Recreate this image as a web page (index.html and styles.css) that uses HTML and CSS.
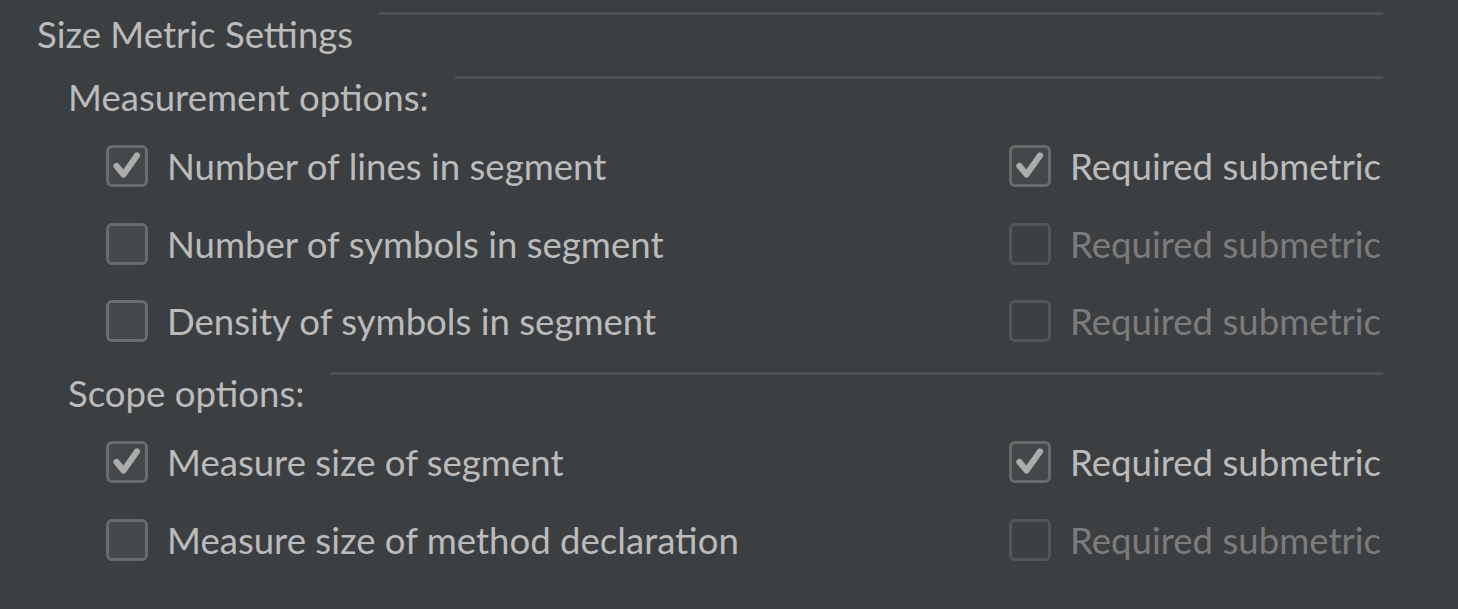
FILE: index.html
```html
<!DOCTYPE html>
<html>
<head>
<meta charset="utf-8">
<link rel="stylesheet" href="styles.css">
</head>
<body>
<div class="panel">
  <div class="titled">
    <span class="title">Size Metric Settings</span>
    <div class="sep"></div>
  </div>

  <div class="group">
    <div class="titled sub">
      <span class="subtitle">Measurement options:</span>
      <div class="sep"></div>
    </div>
    <div class="rows">
      <div class="row">
        <label class="cb"><span class="box checked"><svg viewBox="0 0 42 42"><polyline points="10.5,21 17.5,29.5 31,10.5"/></svg></span><span class="lbl">Number of lines in segment</span></label>
        <label class="cb"><span class="box checked"><svg viewBox="0 0 42 42"><polyline points="10.5,21 17.5,29.5 31,10.5"/></svg></span><span class="lbl">Required submetric</span></label>
      </div>
      <div class="row">
        <label class="cb"><span class="box"></span><span class="lbl">Number of symbols in segment</span></label>
        <label class="cb disabled"><span class="box"></span><span class="lbl">Required submetric</span></label>
      </div>
      <div class="row">
        <label class="cb"><span class="box"></span><span class="lbl">Density of symbols in segment</span></label>
        <label class="cb disabled"><span class="box"></span><span class="lbl">Required submetric</span></label>
      </div>
    </div>
  </div>

  <div class="group second">
    <div class="titled sub">
      <span class="subtitle">Scope options:</span>
      <div class="sep"></div>
    </div>
    <div class="rows">
      <div class="row">
        <label class="cb"><span class="box checked"><svg viewBox="0 0 42 42"><polyline points="10.5,21 17.5,29.5 31,10.5"/></svg></span><span class="lbl">Measure size of segment</span></label>
        <label class="cb"><span class="box checked"><svg viewBox="0 0 42 42"><polyline points="10.5,21 17.5,29.5 31,10.5"/></svg></span><span class="lbl">Required submetric</span></label>
      </div>
      <div class="row">
        <label class="cb"><span class="box"></span><span class="lbl">Measure size of method declaration</span></label>
        <label class="cb disabled"><span class="box"></span><span class="lbl">Required submetric</span></label>
      </div>
    </div>
  </div>
</div>
</body>
</html>
```
FILE: styles.css
```css
html, body {
  margin: 0;
  padding: 0;
  background: #3c3f41;
  height: 100%;
}

.panel {
  width: 1346px;
  padding: 12px 0 0 37px;
  font-family: Lato, "Open Sans", sans-serif;
  font-size: 36.6px;
  line-height: 44px;
  color: #bbbbbb;
}

.titled {
  display: flex;
  align-items: flex-start;
  gap: 26px;
}

.title,
.subtitle {
  white-space: nowrap;
}

.sep {
  flex: 1;
  height: 3px;
  background: #515151;
}

.group {
  margin-top: 19px;
  padding-left: 31px;
}

.group.second {
  margin-top: 28px;
}

.sub .sep {
  margin-top: 1px;
}

.rows {
  margin-top: 25px;
  padding-left: 38px;
  display: flex;
  flex-direction: column;
  gap: 33.5px;
}

.second .rows .row + .row {
  margin-top: 0.5px;
}

.row {
  display: grid;
  grid-template-columns: 903px auto;
  height: 44px;
  align-items: center;
}

.cb {
  display: flex;
  align-items: center;
  gap: 19px;
  white-space: nowrap;
}

.box {
  box-sizing: border-box;
  width: 42px;
  height: 42px;
  border: 3px solid #6b6b6b;
  border-radius: 6px;
  background: #43494a;
  flex: none;
  display: flex;
}

.box svg {
  flex: none;
  width: 42px;
  height: 42px;
  margin: -3px;
}

.box polyline {
  fill: none;
  stroke: #acacac;
  stroke-width: 6.2;
  stroke-linecap: round;
  stroke-linejoin: round;
}

.disabled .box {
  border-color: #535557;
  background: #3c3f41;
}

.disabled .lbl {
  color: #7c7c7c;
}
```
